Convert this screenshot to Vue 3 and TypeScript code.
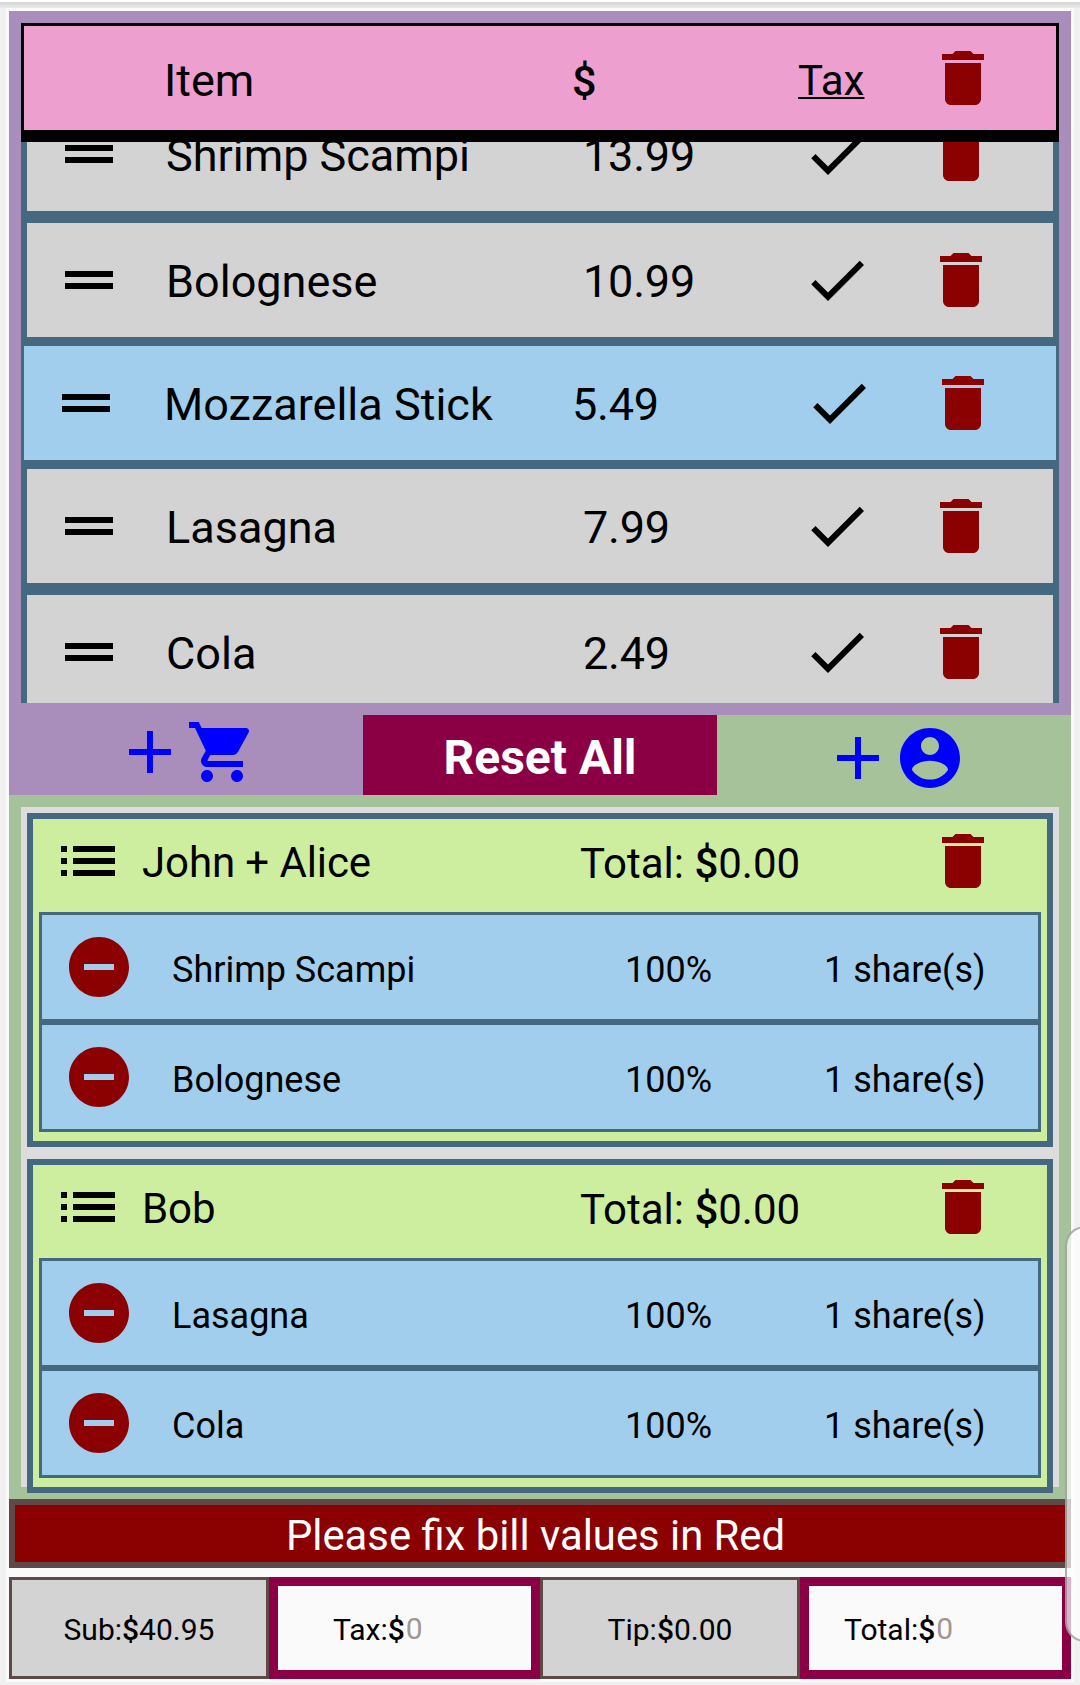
<script setup lang="ts">
interface BillItem {
  name: string
  price: string
  assigned: boolean
}

interface Share {
  name: string
  percent: string
  shares: string
}

interface Group {
  name: string
  total: string
  items: Share[]
}

interface BillField {
  label: string
  value: string
  invalid: boolean
}

const items: BillItem[] = [
  { name: 'Shrimp Scampi', price: '13.99', assigned: true },
  { name: 'Bolognese', price: '10.99', assigned: true },
  { name: 'Mozzarella Stick', price: '5.49', assigned: false },
  { name: 'Lasagna', price: '7.99', assigned: true },
  { name: 'Cola', price: '2.49', assigned: true },
]

const share = (name: string): Share => ({ name, percent: '100%', shares: '1 share(s)' })

const groups: Group[] = [
  { name: 'John + Alice', total: '0.00', items: [share('Shrimp Scampi'), share('Bolognese')] },
  { name: 'Bob', total: '0.00', items: [share('Lasagna'), share('Cola')] },
]

const fields: BillField[] = [
  { label: 'Sub:', value: '40.95', invalid: false },
  { label: 'Tax:', value: '0', invalid: true },
  { label: 'Tip:', value: '0.00', invalid: false },
  { label: 'Total:', value: '0', invalid: true },
]

const trash = 'M6 19c0 1.1.9 2 2 2h8c1.1 0 2-.9 2-2V7H6v12zM19 4h-3.5l-1-1h-5l-1 1H5v2h14V4z'
const drag = 'M20 9H4v2h16V9zM4 15h16v-2H4v2z'
const check = 'M9 16.17L4.83 12l-1.42 1.41L9 19 21 7l-1.41-1.41z'
const plus = 'M19 13h-6v6h-2v-6H5v-2h6V5h2v6h6v2z'
const cart =
  'M7 18c-1.1 0-1.99.9-1.99 2S5.9 22 7 22s2-.9 2-2-.9-2-2-2zM1 2v2h2l3.6 7.59-1.35 2.45c-.16.28-.25.61-.25.96 0 1.1.9 2 2 2h12v-2H7.42c-.14 0-.25-.11-.25-.25l.03-.12.9-1.63h7.45c.75 0 1.41-.41 1.75-1.03l3.58-6.49c.08-.14.12-.31.12-.48 0-.55-.45-1-1-1H5.21l-.94-2H1zm16 16c-1.1 0-1.99.9-1.99 2s.89 2 1.99 2 2-.9 2-2-.9-2-2-2z'
const account =
  'M12 2C6.48 2 2 6.48 2 12s4.48 10 10 10 10-4.48 10-10S17.52 2 12 2zm0 3c1.66 0 3 1.34 3 3s-1.34 3-3 3-3-1.34-3-3 1.34-3 3-3zm0 14.2c-2.5 0-4.71-1.28-6-3.22.03-1.99 4-3.08 6-3.08 1.99 0 5.97 1.09 6 3.08-1.29 1.94-3.5 3.22-6 3.22z'
const list =
  'M3 13h2v-2H3v2zm0 4h2v-2H3v2zm0-8h2V7H3v2zm4 4h14v-2H7v2zm0 4h14v-2H7v2zM7 7v2h14V7H7z'
const minus = 'M12 2C6.48 2 2 6.48 2 12s4.48 10 10 10 10-4.48 10-10S17.52 2 12 2zm5 11H7v-2h10v2z'
</script>

<template>
  <div class="screen">
    <div class="topline"></div>
    <main class="app">
      <section class="bill">
        <header class="head">
          <span class="head-item">Item</span>
          <span class="head-price">$</span>
          <span class="head-tax">Tax</span>
          <svg class="icon red" viewBox="0 0 24 24"><path :d="trash" /></svg>
        </header>
        <div class="scroll">
          <div class="rows">
            <div v-for="item in items" :key="item.name" class="row" :class="{ open: !item.assigned }">
              <svg class="icon" viewBox="0 0 24 24"><path :d="drag" /></svg>
              <span class="row-name">{{ item.name }}</span>
              <span class="row-price">{{ item.price }}</span>
              <svg class="icon" viewBox="0 0 24 24"><path :d="check" /></svg>
              <svg class="icon red" viewBox="0 0 24 24"><path :d="trash" /></svg>
            </div>
          </div>
        </div>
      </section>

      <nav class="actions">
        <button class="add add-item">
          <svg class="icon" viewBox="0 0 24 24"><path :d="plus" /></svg>
          <svg class="icon" viewBox="0 0 24 24"><path :d="cart" /></svg>
        </button>
        <button class="reset">Reset All</button>
        <button class="add add-person">
          <svg class="icon" viewBox="0 0 24 24"><path :d="plus" /></svg>
          <svg class="icon" viewBox="0 0 24 24"><path :d="account" /></svg>
        </button>
      </nav>

      <section class="people">
        <div class="groups">
          <article v-for="group in groups" :key="group.name" class="group">
            <div class="group-head">
              <svg class="icon" viewBox="0 0 24 24"><path :d="list" /></svg>
              <span class="group-name">{{ group.name }}</span>
              <span class="group-total">Total: <b>$</b>{{ group.total }}</span>
              <svg class="icon red" viewBox="0 0 24 24"><path :d="trash" /></svg>
            </div>
            <div v-for="entry in group.items" :key="entry.name" class="share">
              <svg class="icon red" viewBox="0 0 24 24"><path :d="minus" /></svg>
              <span>{{ entry.name }}</span>
              <span>{{ entry.percent }}</span>
              <span>{{ entry.shares }}</span>
            </div>
          </article>
        </div>
      </section>

      <div class="warning">Please fix bill values in Red</div>

      <footer class="totals">
        <div v-for="field in fields" :key="field.label" class="field" :class="{ invalid: field.invalid }">
          <span>{{ field.label }}<b>$</b></span><span class="value">{{ field.value }}</span>
        </div>
      </footer>
    </main>
    <div class="edge-handle"></div>
  </div>
</template>

<style>
body {
  margin: 0;
  background: #f0f0f0;
}
</style>

<style scoped>
.screen {
  position: relative;
  width: 1080px;
  height: 1685px;
  overflow: hidden;
  box-sizing: border-box;
  background: #f0f0f0;
  font-family: Roboto, 'Liberation Sans', sans-serif;
  color: #000;
}
.screen *,
.edge-handle {
  box-sizing: border-box;
}
b {
  font-weight: 500;
}
.topline {
  height: 8px;
  border-top: 2px solid #fff;
  background: linear-gradient(#d6d6d6, #e9e9e9);
}
.app {
  width: 1068px;
  height: 1674px;
  margin: 0 6px;
  padding: 3px;
  background: #fafafa;
}
.icon {
  display: block;
  width: 72px;
  height: 72px;
  flex: none;
  fill: currentColor;
}
.red {
  color: #8b0000;
}

.bill {
  height: 704px;
  padding: 12px;
  background: #a98dba;
}
.head {
  display: grid;
  grid-template-columns: 140px 408px 226px 129px 72px;
  align-items: center;
  height: 119px;
  border: 3px solid #000;
  border-bottom-width: 12px;
  background: #ed9fcf;
  font-size: 45px;
}
.head span {
  padding-top: 5px;
}
.head-item {
  grid-column: 2;
}
.head .head-price {
  font-size: 43px;
  font-weight: 500;
}
.head .head-tax {
  font-size: 42px;
  text-decoration: underline;
  text-decoration-thickness: 2px;
  text-underline-offset: 2px;
}
.scroll {
  height: 561px;
  overflow: hidden;
  background: #436880;
}
.rows {
  margin-top: -51px;
}
.row {
  display: grid;
  grid-template-columns: 26px 113px 417px 218px 124px 72px;
  align-items: center;
  height: 126px;
  border: 6px solid #436880;
  background: #d3d3d3;
  font-size: 45px;
}
.row > .icon:first-child {
  grid-column: 2;
}
.row span {
  padding-top: 3px;
}
.row.open {
  grid-template-columns: 26px 114px 408px 231px 124px 72px;
  height: 120px;
  border-width: 3px;
  background: #a0ceec;
}
.row-price {
  letter-spacing: -0.2px;
}

.actions {
  display: grid;
  grid-template-columns: 354px 354px 354px;
  height: 80px;
}
.actions button {
  margin: 0;
  border: 0;
  font: 700 48px Roboto, 'Liberation Sans', sans-serif;
}
.add {
  display: flex;
  color: #00f;
}
.actions .add-item {
  padding: 1px 0 0 105px;
  background: #a98dba;
}
.actions .add-person {
  padding: 7px 0 0 105px;
  background: #a6c29a;
}
.actions .reset {
  padding: 4px 0 0;
  background: #8b0045;
  color: #fff;
}

.people {
  height: 704px;
  padding: 12px 12px 0;
  background: #a6c29a;
}
.groups {
  display: flex;
  flex-direction: column;
  gap: 12px;
  height: 680px;
  padding: 6px;
  background: #dcdcdc;
}
.group {
  flex: none;
  height: 334px;
  padding: 0 6px 9px;
  border: 6px solid #436880;
  background: #ceee9f;
}
.group-head {
  display: grid;
  grid-template-columns: 90px 438px 347px 72px;
  height: 93px;
  padding: 6px 0 0 13px;
  font-size: 42px;
}
.group-head span {
  padding-top: 13px;
}
.group-name {
  letter-spacing: -0.1px;
}
.group-head .group-total {
  padding-top: 14px;
}
.share {
  display: grid;
  grid-template-columns: 109px 453px 199px 1fr;
  align-items: center;
  height: 110px;
  padding-left: 21px;
  border: 3px solid #436880;
  background: #a0ceec;
  font-size: 36px;
}
.share span {
  padding-top: 6px;
}

.warning {
  height: 69px;
  padding-right: 9px;
  border: 6px solid #5f4947;
  background: #8b0000;
  color: #fff;
  font-size: 41.8px;
  line-height: 61px;
  text-align: center;
}
.totals {
  display: grid;
  grid-template-columns: 260px 271px 260px 271px;
  height: 102px;
  margin-top: 9px;
}
.field {
  display: flex;
  align-items: center;
  justify-content: center;
  padding-top: 3px;
  border: 3px solid #5f4947;
  background: #d3d3d3;
  font-size: 30px;
}
.field.invalid {
  justify-content: flex-start;
  padding-left: 55px;
  border: 9px solid #8b0045;
  background: #fafafa;
}
.field.invalid:last-child {
  padding-left: 35px;
}
.invalid .value {
  padding: 0 0 2px 1px;
  color: #a09794;
}

.edge-handle {
  position: absolute;
  top: 1226px;
  left: 1065px;
  width: 40px;
  height: 416px;
  border: 2px solid rgba(120, 120, 120, 0.6);
  border-radius: 22px;
  background: rgba(255, 255, 255, 0.7);
}
</style>
